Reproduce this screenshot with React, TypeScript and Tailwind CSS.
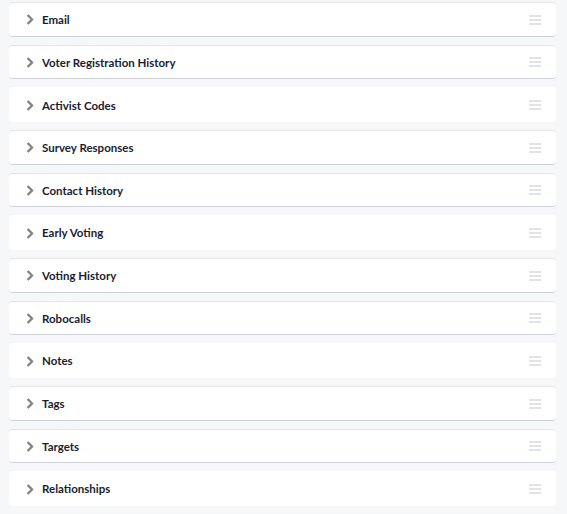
import React from "react";

const sections = [
  "Email",
  "Voter Registration History",
  "Activist Codes",
  "Survey Responses",
  "Contact History",
  "Early Voting",
  "Voting History",
  "Robocalls",
  "Notes",
  "Tags",
  "Targets",
  "Relationships",
];

function Chevron() {
  return (
    <svg width="8" height="11" viewBox="0 0 8 11" className="mt-[1px] shrink-0">
      <path d="M1.6 1 L6 5.5 L1.6 10" fill="none" stroke="#858585" strokeWidth="2.4" strokeLinejoin="miter" />
    </svg>
  );
}

function Grip() {
  return (
    <svg width="12" height="10" viewBox="0 0 12 10" className="mt-[1px] shrink-0">
      <path d="M0 1h12M0 5h12M0 9h12" stroke="#d7dadf" strokeWidth="1.5" />
    </svg>
  );
}

export default function App() {
  return (
    <div className="min-h-[514px] w-[567px] bg-[#f6f7f9] pt-[2px] pl-[9px] pr-[11px] font-['Lato','Open_Sans',sans-serif]">
      <div className="flex flex-col gap-[8px]">
        {sections.map((s, i) => (
          <div
            key={s}
            className={
              "flex h-[34.667px] items-center rounded-[4px] bg-white pl-[17px] pr-[15px] " +
              (i % 3 === 2
                ? "border-0"
                : "border-t border-b border-t-[#e3e6ea] border-b-[#cfd3d9]")
            }
          >
            <Chevron />
            <span className="mt-[1px] ml-[8px] flex-1 text-[11.5px] font-bold text-[#1b1d2e]">{s}</span>
            <Grip />
          </div>
        ))}
      </div>
    </div>
  );
}
